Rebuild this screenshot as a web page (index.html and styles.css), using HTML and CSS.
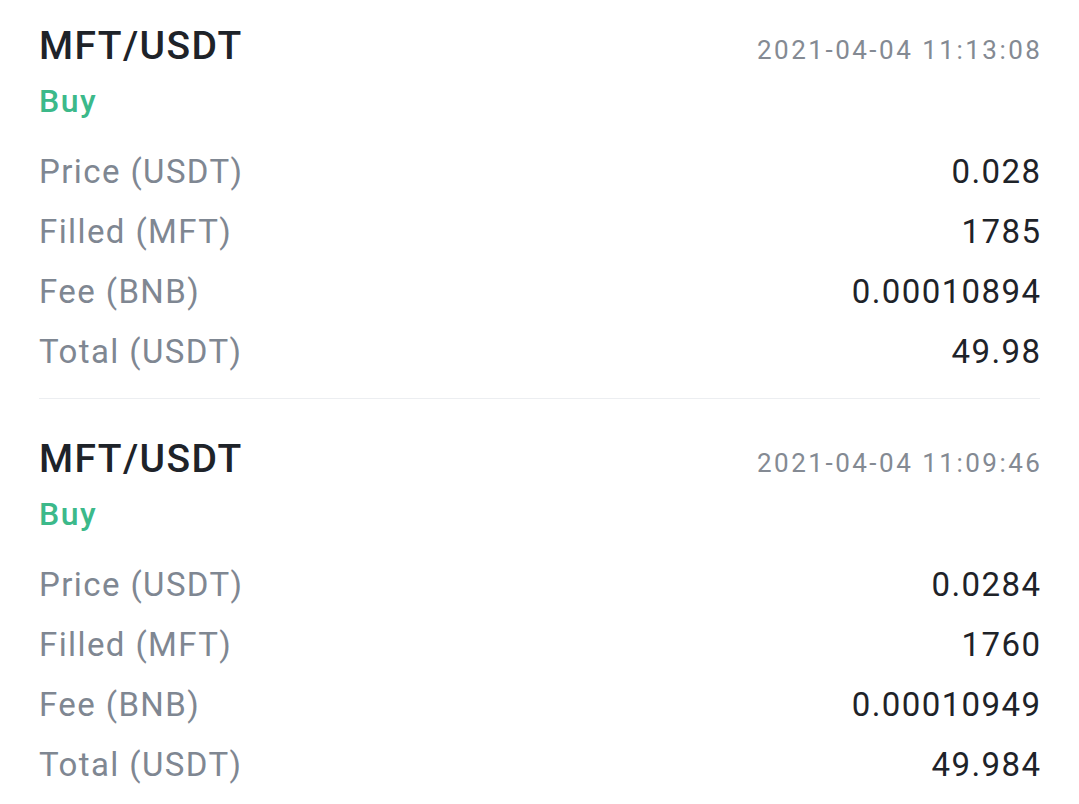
FILE: index.html
```html
<!DOCTYPE html>
<html lang="en">
<head>
<meta charset="utf-8">
<title>Trade History</title>
<link rel="stylesheet" href="styles.css">
</head>
<body>
<main class="list">
  <section class="card">
    <div class="card-head">
      <span class="pair">MFT/USDT</span>
      <span class="time">2021-04-04 11:13:08</span>
    </div>
    <div class="side">Buy</div>
    <div class="rows">
      <div class="row"><span class="label">Price (USDT)</span><span class="value">0.028</span></div>
      <div class="row"><span class="label">Filled (MFT)</span><span class="value">1785</span></div>
      <div class="row"><span class="label">Fee (BNB)</span><span class="value">0.00010894</span></div>
      <div class="row"><span class="label">Total (USDT)</span><span class="value">49.98</span></div>
    </div>
  </section>
  <section class="card">
    <div class="card-head">
      <span class="pair">MFT/USDT</span>
      <span class="time">2021-04-04 11:09:46</span>
    </div>
    <div class="side">Buy</div>
    <div class="rows">
      <div class="row"><span class="label">Price (USDT)</span><span class="value">0.0284</span></div>
      <div class="row"><span class="label">Filled (MFT)</span><span class="value">1760</span></div>
      <div class="row"><span class="label">Fee (BNB)</span><span class="value">0.00010949</span></div>
      <div class="row"><span class="label">Total (USDT)</span><span class="value">49.984</span></div>
    </div>
  </section>
</main>
</body>
</html>
```
FILE: styles.css
```css
html, body {
  margin: 0;
  padding: 0;
  background: #ffffff;
}
body {
  font-family: Roboto, "Liberation Sans", sans-serif;
  color: #1e2329;
  overflow: hidden;
}
.list {
  padding: 0 39px 0 39px;
}
.card {
  padding-top: 38px;
  padding-bottom: 16px;
  border-bottom: 1px solid #eceef1;
}
.card:first-child {
  padding-top: 24px;
}
.card-head {
  display: flex;
  justify-content: space-between;
  align-items: baseline;
}
.pair {
  font-size: 39px;
  line-height: 44px;
  font-weight: 500;
  letter-spacing: 1.4px;
  color: #1e2329;
}
.time {
  font-size: 26px;
  line-height: 30px;
  letter-spacing: 2.5px;
  margin-right: -2.5px;
  color: #848a93;
}
.side {
  margin-top: 15px;
  font-size: 32px;
  line-height: 36px;
  font-weight: 500;
  letter-spacing: 1.5px;
  color: #3cb98a;
}
.rows {
  margin-top: 23px;
}
.row {
  display: flex;
  justify-content: space-between;
  align-items: baseline;
  height: 60px;
  line-height: 60px;
  font-size: 33px;
  letter-spacing: 1.4px;
}
.label {
  color: #7f8792;
}
.value {
  color: #1e2329;
  margin-right: -1.4px;
}
```
